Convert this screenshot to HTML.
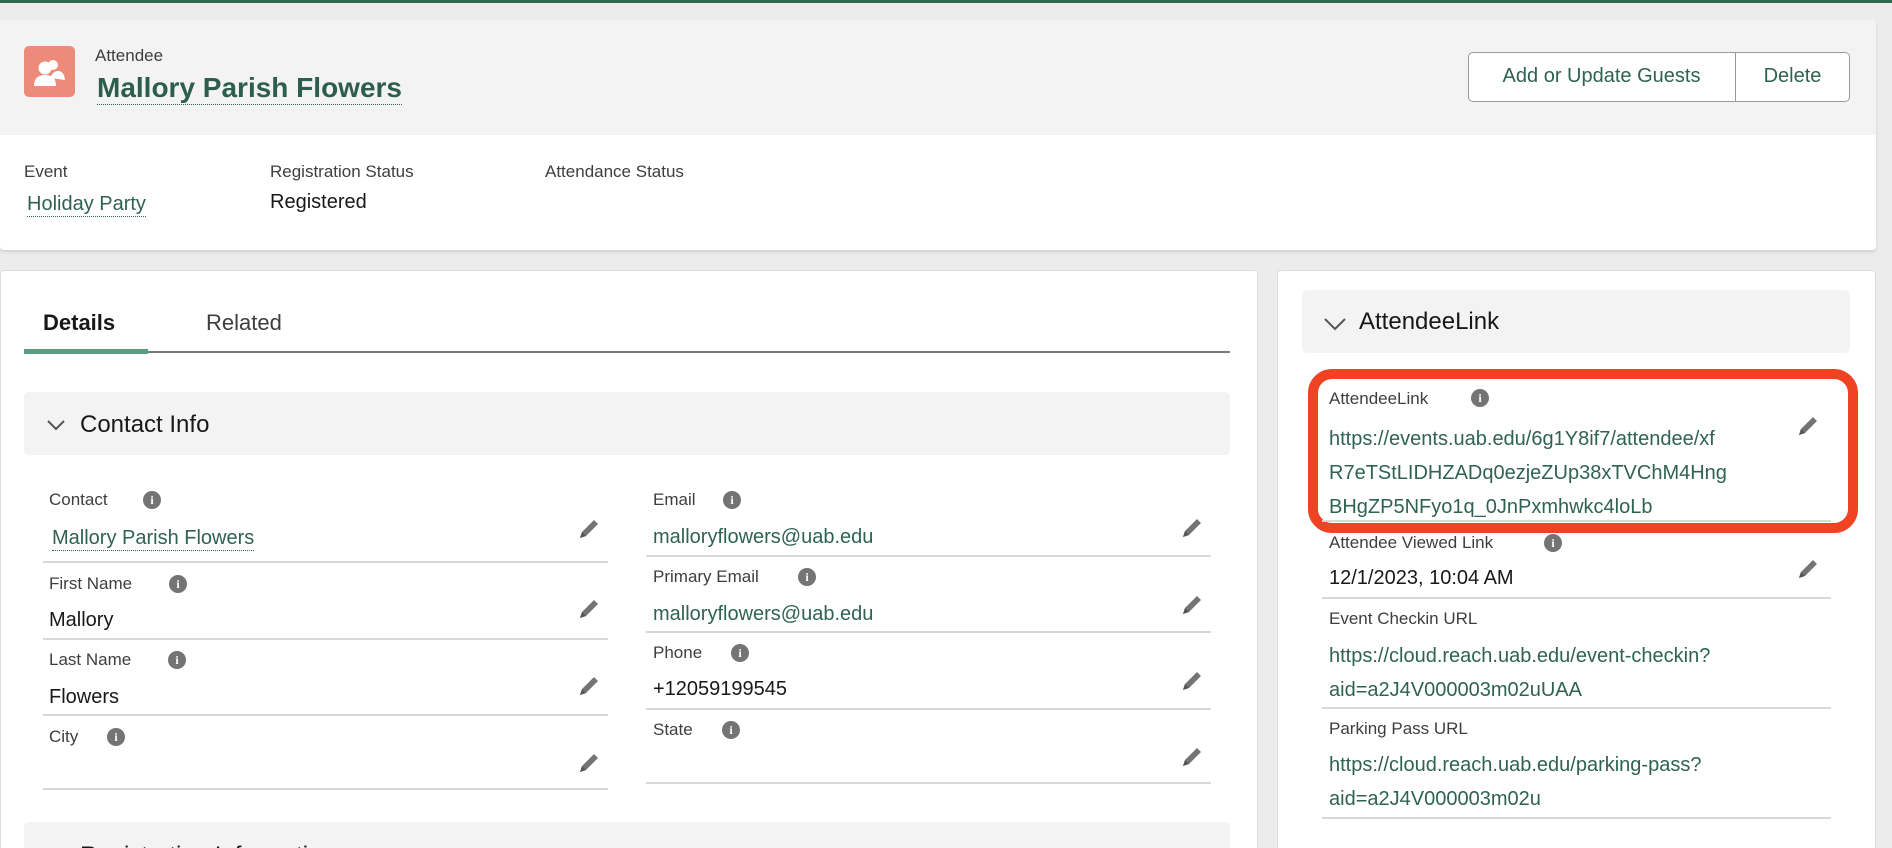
<!DOCTYPE html>
<html style="overflow:hidden;width:1892px;height:848px"><head><meta charset="utf-8"><style>
*{box-sizing:border-box;margin:0;padding:0}
body{width:1892px;height:848px;overflow:hidden;background:#ececec;font-family:"Liberation Sans",Arial,sans-serif;position:relative;color:#181818}
.a{position:absolute;white-space:nowrap}
.g{color:#2f6350}
.lbl{font-size:17px;color:#3e3e3c;line-height:20px}
.val{font-size:20px;line-height:24px}
.info{position:absolute;width:18px;height:18px;border-radius:50%;background:#747474;color:#fff;font-size:12px;font-weight:bold;text-align:center;line-height:18px;font-family:"Liberation Serif",serif}
.line{position:absolute;height:2px;background:#d8d8d8}
.pen{position:absolute;width:26px;height:26px}
.dot{border-bottom:1px dotted #2f6350}
</style></head><body>
<div class="a" style="left:0;top:0;width:1892px;height:3px;background:#2d6a4f"></div>
<!-- header card -->
<div class="a" style="left:0;top:20px;width:1876px;height:230px;background:#fff;border-radius:4px;box-shadow:0 2px 3px rgba(0,0,0,.12)"></div>
<div class="a" style="left:0;top:20px;width:1876px;height:115px;background:#f3f3f3;border-radius:4px 4px 0 0"></div>
<div class="a" style="left:24px;top:46px;width:51px;height:51px;background:#ee8a7a;border-radius:5px">
<svg width="51" height="51" viewBox="0 0 51 51"><circle cx="29" cy="19" r="5" fill="#fff"/><path d="M26 32 q3-7 8-7 q6 0 7 9z" fill="#fff"/><circle cx="21" cy="22" r="6.5" fill="#fff"/><path d="M10 40 q0-11 11-11 q11 0 11 11z" fill="#fff"/></svg></div>
<div class="a" style="left:95px;top:46px;font-size:17px;color:#3e3e3c">Attendee</div>
<div class="a g" style="left:97px;top:71px;font-size:28px;font-weight:bold;border-bottom:1px dotted #2f6350;line-height:33px;color:#2d5e4c">Mallory Parish Flowers</div>
<div class="a" style="left:1468px;top:52px;width:382px;height:50px;background:#fff;border:1px solid #9a9a9a;border-radius:5px"></div>
<div class="a" style="left:1735px;top:52px;width:1px;height:50px;background:#9a9a9a"></div>
<div class="a g" style="left:1468px;top:65px;width:267px;text-align:center;font-size:20px">Add or Update Guests</div>
<div class="a g" style="left:1735px;top:65px;width:115px;text-align:center;font-size:20px">Delete</div>
<div class="a lbl" style="left:24px;top:162px">Event</div>
<div class="a val g dot" style="left:27px;top:192px;line-height:24px">Holiday Party</div>
<div class="a lbl" style="left:270px;top:162px">Registration Status</div>
<div class="a val" style="left:270px;top:190px">Registered</div>
<div class="a lbl" style="left:545px;top:162px">Attendance Status</div>
<!-- details card -->
<div class="a" style="left:0;top:270px;width:1258px;height:600px;background:#fff;border-radius:4px;border:1px solid #dcdcdc"></div>
<div class="a" style="left:43px;top:310px;font-size:22px;font-weight:bold">Details</div>
<div class="a" style="left:206px;top:310px;font-size:22px;color:#3e3e3c">Related</div>
<div class="a" style="left:148px;top:351px;width:1082px;height:2px;background:#7a7a7a"></div>
<div class="a" style="left:24px;top:349px;width:124px;height:5px;background:#5a9c80"></div>
<div class="a" style="left:24px;top:392px;width:1206px;height:63px;background:#f3f3f3;border-radius:5px"></div>
<svg class="a" style="left:46px;top:418px" width="20" height="14"><path d="M2 3 L10 11 L18 3" stroke="#555" stroke-width="2" fill="none"/></svg>
<div class="a" style="left:80px;top:411px;font-size:24px">Contact Info</div>
<div class="a" style="left:24px;top:822px;width:1206px;height:60px;background:#f3f3f3;border-radius:5px"></div>
<div class="a" style="left:80px;top:842px;font-size:24px">Registration Information</div>

<!-- left column -->
<div class="a lbl" style="left:49px;top:490px">Contact</div><div class="info" style="left:143px;top:491px">i</div>
<div class="a val g dot" style="left:52px;top:526px">Mallory Parish Flowers</div>
<div class="line" style="left:43px;top:561px;width:565px"></div>
<div class="a lbl" style="left:49px;top:574px">First Name</div><div class="info" style="left:169px;top:575px">i</div>
<div class="a val" style="left:49px;top:608px">Mallory</div>
<div class="line" style="left:43px;top:638px;width:565px"></div>
<div class="a lbl" style="left:49px;top:650px">Last Name</div><div class="info" style="left:168px;top:651px">i</div>
<div class="a val" style="left:49px;top:685px">Flowers</div>
<div class="line" style="left:43px;top:714px;width:565px"></div>
<div class="a lbl" style="left:49px;top:727px">City</div><div class="info" style="left:107px;top:728px">i</div>
<div class="line" style="left:43px;top:788px;width:565px"></div>
<!-- right column -->
<div class="a lbl" style="left:653px;top:490px">Email</div><div class="info" style="left:723px;top:491px">i</div>
<div class="a val g" style="left:653px;top:525px">malloryflowers@uab.edu</div>
<div class="line" style="left:646px;top:555px;width:565px"></div>
<div class="a lbl" style="left:653px;top:567px">Primary Email</div><div class="info" style="left:798px;top:568px">i</div>
<div class="a val g" style="left:653px;top:602px">malloryflowers@uab.edu</div>
<div class="line" style="left:646px;top:631px;width:565px"></div>
<div class="a lbl" style="left:653px;top:643px">Phone</div><div class="info" style="left:731px;top:644px">i</div>
<div class="a val" style="left:653px;top:677px">+12059199545</div>
<div class="line" style="left:646px;top:708px;width:565px"></div>
<div class="a lbl" style="left:653px;top:720px">State</div><div class="info" style="left:722px;top:721px">i</div>
<div class="line" style="left:646px;top:782px;width:565px"></div>

<!-- right card -->
<div class="a" style="left:1277px;top:270px;width:599px;height:600px;background:#fff;border-radius:4px;border:1px solid #dcdcdc"></div>
<div class="a" style="left:1302px;top:290px;width:548px;height:63px;background:#f3f3f3;border-radius:5px"></div>
<svg class="a" style="left:1323px;top:316px" width="24" height="16"><path d="M2 3 L12 13 L22 3" stroke="#555" stroke-width="2" fill="none"/></svg>
<div class="a" style="left:1359px;top:308px;font-size:24px">AttendeeLink</div>
<div class="a" style="left:1308px;top:369px;width:550px;height:164px;border:10px solid #f04323;border-radius:24px"></div>
<div class="a lbl" style="left:1329px;top:389px">AttendeeLink</div><div class="info" style="left:1471px;top:389px">i</div>
<div class="a val g" style="left:1329px;top:422px;line-height:34px">https://events.uab.edu/6g1Y8if7/attendee/xf<br>R7eTStLIDHZADq0ezjeZUp38xTVChM4Hng<br>BHgZP5NFyo1q_0JnPxmhwkc4loLb</div>
<div class="line" style="left:1322px;top:520px;width:509px"></div>
<div class="a lbl" style="left:1329px;top:533px">Attendee Viewed Link</div><div class="info" style="left:1544px;top:534px">i</div>
<div class="a val" style="left:1329px;top:566px">12/1/2023, 10:04 AM</div>
<div class="line" style="left:1322px;top:597px;width:509px"></div>
<div class="a lbl" style="left:1329px;top:609px">Event Checkin URL</div>
<div class="a val g" style="left:1329px;top:639px;line-height:34px">https://cloud.reach.uab.edu/event-checkin?<br>aid=a2J4V000003m02uUAA</div>
<div class="line" style="left:1322px;top:707px;width:509px"></div>
<div class="a lbl" style="left:1329px;top:719px">Parking Pass URL</div>
<div class="a val g" style="left:1329px;top:748px;line-height:34px">https://cloud.reach.uab.edu/parking-pass?<br>aid=a2J4V000003m02u</div>
<div class="line" style="left:1322px;top:817px;width:509px"></div>

<!-- pencils -->
<svg width="0" height="0" style="position:absolute"><defs><g id="p"><path d="M4 22 L6 16 L18 4 L22 8 L10 20 Z" fill="#747474"/><path d="M4 22 L6 16 L10 20 Z" fill="#555"/></g></defs></svg>
<svg class="pen" style="left:576px;top:516px"><use href="#p"/></svg>
<svg class="pen" style="left:576px;top:596px"><use href="#p"/></svg>
<svg class="pen" style="left:576px;top:673px"><use href="#p"/></svg>
<svg class="pen" style="left:576px;top:750px"><use href="#p"/></svg>
<svg class="pen" style="left:1179px;top:515px"><use href="#p"/></svg>
<svg class="pen" style="left:1179px;top:592px"><use href="#p"/></svg>
<svg class="pen" style="left:1179px;top:668px"><use href="#p"/></svg>
<svg class="pen" style="left:1179px;top:744px"><use href="#p"/></svg>
<svg class="pen" style="left:1795px;top:413px"><use href="#p"/></svg>
<svg class="pen" style="left:1795px;top:556px"><use href="#p"/></svg>
</body></html>
